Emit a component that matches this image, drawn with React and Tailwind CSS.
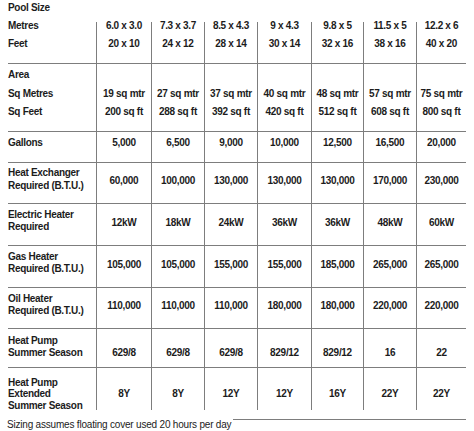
const rows = [
  {
    h: "h-[42px]",
    labels: ["Metres", "Feet"],
    lpt: "pt-0",
    lgap: "gap-[10px]",
    vpt: "pt-0",
    vgap: "gap-[10px]",
    values: [
      ["6.0 x 3.0", "20 x 10"],
      ["7.3 x 3.7", "24 x 12"],
      ["8.5 x 4.3", "28 x 14"],
      ["9 x 4.3", "30 x 14"],
      ["9.8 x 5", "32 x 16"],
      ["11.5 x 5", "38 x 16"],
      ["12.2 x 6", "40 x 20"],
    ],
  },
  {
    h: "h-[68px]",
    labels: ["Area", "Sq Metres", "Sq Feet"],
    lpt: "pt-[7px]",
    lgap: "gap-[10.5px]",
    vpt: "pt-[7px]",
    vgap: "gap-[10.5px]",
    values: [
      ["", "19 sq mtr", "200 sq ft"],
      ["", "27 sq mtr", "288 sq ft"],
      ["", "37 sq mtr", "392 sq ft"],
      ["", "40 sq mtr", "420 sq ft"],
      ["", "48 sq mtr", "512 sq ft"],
      ["", "57 sq mtr", "608 sq ft"],
      ["", "75 sq mtr", "800 sq ft"],
    ],
  },
  {
    h: "h-[31px]",
    labels: ["Gallons"],
    lpt: "pt-[7px]",
    vpt: "pt-[7px]",
    values: ["5,000", "6,500", "9,000", "10,000", "12,500", "16,500", "20,000"],
  },
  {
    h: "h-[41px]",
    labels: ["Heat Exchanger", "Required (B.T.U.)"],
    lpt: "pt-[6px]",
    lgap: "gap-[4.5px]",
    vpt: "pt-[14px]",
    values: ["60,000", "100,000", "130,000", "130,000", "130,000", "170,000", "230,000"],
  },
  {
    h: "h-[42px]",
    labels: ["Electric Heater", "Required"],
    lpt: "pt-[7px]",
    lgap: "gap-[4px]",
    vpt: "pt-[14.5px]",
    values: ["12kW", "18kW", "24kW", "36kW", "36kW", "48kW", "60kW"],
  },
  {
    h: "h-[42px]",
    labels: ["Gas Heater", "Required (B.T.U.)"],
    lpt: "pt-[6.5px]",
    lgap: "gap-[4px]",
    vpt: "pt-[14.5px]",
    values: ["105,000", "105,000", "155,000", "155,000", "185,000", "265,000", "265,000"],
  },
  {
    h: "h-[41px]",
    labels: ["Oil Heater", "Required (B.T.U.)"],
    lpt: "pt-[6.5px]",
    lgap: "gap-[4px]",
    vpt: "pt-[14px]",
    values: ["110,000", "110,000", "110,000", "180,000", "180,000", "220,000", "220,000"],
  },
  {
    h: "h-[39px]",
    labels: ["Heat Pump", "Summer Season"],
    lpt: "pt-[8px]",
    lgap: "gap-[3.5px]",
    vpt: "pt-[19.5px]",
    values: ["629/8", "629/8", "629/8", "829/12", "829/12", "16", "22"],
  },
  {
    h: "h-[40px]",
    labels: ["Heat Pump", "Extended", "Summer Season"],
    lpt: "pt-[10.5px]",
    lgap: "gap-[3.7px]",
    vpt: "pt-[22px]",
    values: ["8Y", "8Y", "12Y", "12Y", "16Y", "22Y", "22Y"],
    last: true,
  },
];

const grid = "grid grid-cols-[88px_55px_53px_53px_54px_52px_53px_50px]";

const Row = ({ row }) => {
  return (
    <div className={`${grid} ${row.h} ${row.last ? "" : "border-b border-[#7d7d7d]"}`}>
      <div className={`flex flex-col ${row.lpt} ${row.lgap || ""}`}>
        {row.labels.map((l, i) => (
          <div key={i} className="leading-[8px] whitespace-nowrap">
            {l}
          </div>
        ))}
      </div>
      {row.values.map((v, i) => (
        <div key={i} className={`border-l border-[#7d7d7d] flex flex-col items-center ${row.vpt} ${row.vgap || ""}`}>
          {(Array.isArray(v) ? v : [v]).map((t, j) => (
            <div key={j} className="leading-[8px] h-[8px] whitespace-nowrap">
              {t}
            </div>
          ))}
        </div>
      ))}
    </div>
  );
};

export default function App() {
  return (
    <div className="w-[474px] h-[431px] bg-white overflow-hidden font-['Liberation_Sans',Arial,sans-serif] text-[#1c1c1c]">
      <div className="ml-[8px] w-[458px] text-[10px] font-bold tracking-[-0.3px]">
        <div className="h-[22px] pt-[4px] leading-[8px]">Pool Size</div>
        {rows.map((row, i) => (
          <Row key={i} row={row} />
        ))}
      </div>
      <div className="flex items-start pt-[11px] pl-[7px] pr-[8px]">
        <span className="mt-[2px] text-[10px] leading-[8px] tracking-[-0.2px] whitespace-nowrap">
          Sizing assumes floating cover used 20 hours per day
        </span>
        <div className="flex-1 h-px bg-[#7d7d7d] ml-[2px]"></div>
      </div>
    </div>
  );
}
